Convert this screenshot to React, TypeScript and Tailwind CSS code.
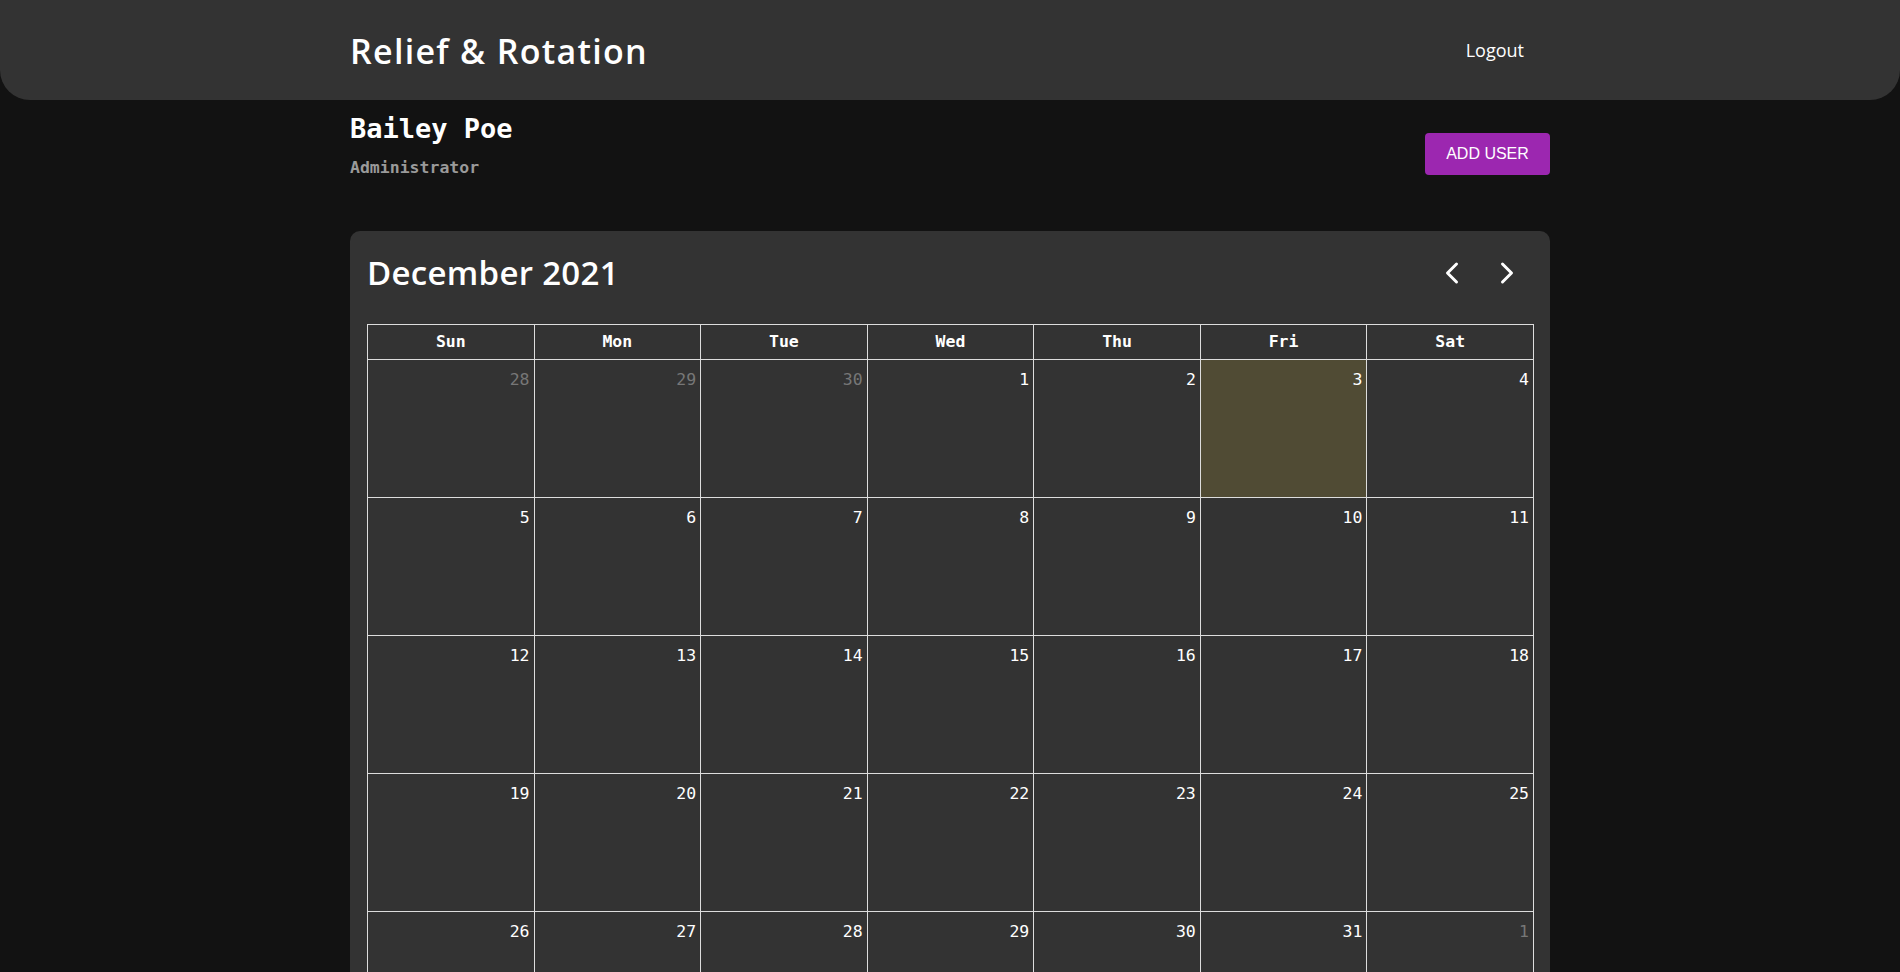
import React from "react";
import { ChevronLeft, ChevronRight } from "lucide-react";

const days = ["Sun", "Mon", "Tue", "Wed", "Thu", "Fri", "Sat"];

type Cell = { n: number; other?: boolean; today?: boolean };

const weeks: Cell[][] = [
  [{ n: 28, other: true }, { n: 29, other: true }, { n: 30, other: true }, { n: 1 }, { n: 2 }, { n: 3, today: true }, { n: 4 }],
  [5, 6, 7, 8, 9, 10, 11].map((n) => ({ n })),
  [12, 13, 14, 15, 16, 17, 18].map((n) => ({ n })),
  [19, 20, 21, 22, 23, 24, 25].map((n) => ({ n })),
  [{ n: 26 }, { n: 27 }, { n: 28 }, { n: 29 }, { n: 30 }, { n: 31 }, { n: 1, other: true }],
];

const sans = { fontFamily: "'Open Sans', Lato, sans-serif" };
const mono = { fontFamily: "'DejaVu Sans Mono', 'Liberation Mono', monospace" };

export default function App() {
  return (
    <div className="min-h-screen bg-[#121212] text-white pb-10">
      <header className="bg-[#333333] rounded-b-[30px] h-[100px]">
        <div className="w-[1200px] mx-auto h-full flex items-center justify-between">
          <h1 className="text-[34px] font-semibold tracking-[1.3px] pt-[2px]" style={sans}>
            Relief &amp; Rotation
          </h1>
          <button className="text-[18px] mr-[26px] text-white" style={sans}>
            Logout
          </button>
        </div>
      </header>

      <div className="w-[1200px] mx-auto">
        <div className="flex items-start justify-between pt-[12px]">
          <div>
            <div className="text-[27px] font-bold leading-[34px]" style={mono}>
              Bailey Poe
            </div>
            <div className="text-[16.5px] font-bold leading-[24px] text-[#9a9a9a] mt-[10px]" style={mono}>
              Administrator
            </div>
          </div>
          <button
            className="w-[125px] h-[42px] rounded-[4px] bg-[#9c27b0] text-white text-[16px] mt-[21px]"
            style={{ fontFamily: "'Liberation Sans', Arial, sans-serif" }}
          >
            ADD USER
          </button>
        </div>

        <div className="mt-[51px] bg-[#333333] rounded-[10px] pl-[17px] pr-[16px] pt-[17px] pb-[17px]">
          <div className="flex items-center justify-between h-[50px]">
            <h2 className="text-[33px] font-semibold tracking-[0.3px]" style={sans}>
              December 2021
            </h2>
            <div className="flex items-center gap-[19px] mr-[9px]">
              <ChevronLeft size={36} strokeWidth={2} />
              <ChevronRight size={36} strokeWidth={2} />
            </div>
          </div>

          <table className="w-full mt-[26px] border-collapse table-fixed" style={mono}>
            <thead>
              <tr>
                {days.map((d) => (
                  <th key={d} className="border border-[#dddddd] h-[35px] text-[16.5px] font-bold">
                    {d}
                  </th>
                ))}
              </tr>
            </thead>
            <tbody>
              {weeks.map((w, i) => (
                <tr key={i}>
                  {w.map((c, j) => (
                    <td
                      key={j}
                      className={`border border-[#dddddd] h-[138px] align-top text-right pr-[4px] pt-[8px] text-[16.5px] ${
                        c.today ? "bg-[#504b34]" : ""
                      } ${c.other ? "text-[#777777]" : "text-white"}`}
                    >
                      {c.n}
                    </td>
                  ))}
                </tr>
              ))}
            </tbody>
          </table>
        </div>
      </div>
    </div>
  );
}
